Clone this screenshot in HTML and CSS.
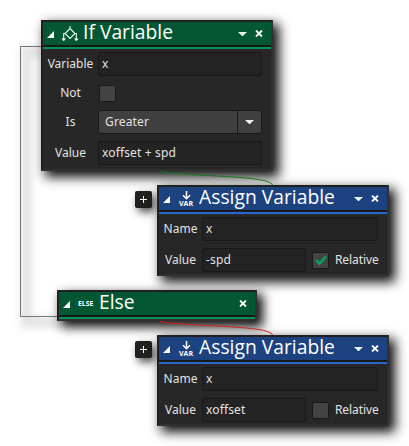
FILE: index.html
```html
<!DOCTYPE html>
<html lang="en">
<head>
<meta charset="utf-8">
<title>If Variable</title>
<link rel="stylesheet" href="styles.css">
</head>
<body>
<svg width="0" height="0" class="defs">
  <symbol id="fold" viewBox="0 0 7 7"><path d="M7 0V7H0Z" fill="#fff"/></symbol>
  <symbol id="down" viewBox="0 0 9 4"><path d="M0 0H9L4.5 4.4Z" fill="#e8f2ee"/></symbol>
  <symbol id="close" viewBox="0 0 8 7"><path d="M1 .5L7 6.5M7 .5L1 6.5" stroke="#fff" stroke-width="1.8"/></symbol>
  <symbol id="plus" viewBox="0 0 7 7"><path d="M3.5 0V7M0 3.5H7" stroke="#fff" stroke-width="1"/></symbol>
  <symbol id="arrow" viewBox="0 0 9 9"><path d="M4.5 0V7.5M1 4.2L4.5 7.7L8 4.2" fill="none" stroke="#fff" stroke-width="1.5"/></symbol>
</svg>
<main class="canvas">
  <svg class="wires" width="409" height="446" fill="none">
    <path class="shade" d="M41 52H26V322H60"/>
    <path class="bracket" d="M41 46.5H20.500V316.500H57"/>
  </svg>

  <section class="node if">
    <header>
      <svg class="fold"><use href="#fold"/></svg>
      <svg class="branch" viewBox="0 0 16 16" fill="none" stroke="#eef5f1" stroke-width="1.100"><path d="M8 0V3M8 2.500L13 7.500L8 12.500L3 7.500ZM3 7.500H1.700V14M13 7.500H14.300V14"/><path d="M0 12.700H3.400L1.700 15ZM12.600 12.700H16L14.300 15Z" fill="#eef5f1" stroke-width=".6"/></svg>
      <h1>If Variable</h1>
      <svg class="down"><use href="#down"/></svg>
      <svg class="close"><use href="#close"/></svg>
    </header>
    <div class="form">
      <label>Variable</label><div class="field">x</div>
      <label>Not</label><div class="check"></div>
      <label>Is</label><div class="field select"><span>Greater</span><i><svg class="down"><use href="#down"/></svg></i></div>
      <label>Value</label><div class="field">xoffset + spd</div>
    </div>
  </section>

  <div class="add first"><svg><use href="#plus"/></svg></div>
  <section class="node assign first">
    <header>
      <svg class="fold"><use href="#fold"/></svg>
      <div class="var"><svg><use href="#arrow"/></svg><b>VAR</b></div>
      <h1>Assign Variable</h1>
      <svg class="down"><use href="#down"/></svg>
      <svg class="close"><use href="#close"/></svg>
    </header>
    <div class="form">
      <label>Name</label><div class="field">x</div>
      <label>Value</label><div class="pair"><div class="field">-spd</div><div class="check"><svg viewBox="0 0 12 10"><path d="M1 5L4.500 8.500L11 1.500" fill="none" stroke="#0c9c5c" stroke-width="2.800"/></svg></div><span>Relative</span></div>
    </div>
  </section>

  <section class="node else">
    <header>
      <svg class="fold"><use href="#fold"/></svg>
      <b class="tag">ELSE</b>
      <h1>Else</h1>
      <svg class="close"><use href="#close"/></svg>
    </header>
  </section>

  <div class="add second"><svg><use href="#plus"/></svg></div>
  <section class="node assign second">
    <header>
      <svg class="fold"><use href="#fold"/></svg>
      <div class="var"><svg><use href="#arrow"/></svg><b>VAR</b></div>
      <h1>Assign Variable</h1>
      <svg class="down"><use href="#down"/></svg>
      <svg class="close"><use href="#close"/></svg>
    </header>
    <div class="form">
      <label>Name</label><div class="field">x</div>
      <label>Value</label><div class="pair"><div class="field">xoffset</div><div class="check"></div><span>Relative</span></div>
    </div>
  </section>

  <svg class="wires" width="409" height="446" fill="none">
    <path stroke="#19751f" d="M160 171.500C190 177 270 175 272.500 185"/>
    <path stroke="#d42020" d="M160 321.500C190 327 270 325 272.500 335"/>
  </svg>
</main>
</body>
</html>
```
FILE: styles.css
```css
*, *::after { box-sizing: border-box; }
body { margin: 0; background: #fff; font: 12px/24px "Noto Sans", sans-serif; color: #e2e2e2; }
svg { display: block; flex: none; overflow: visible; }
.defs { position: absolute; }
.canvas { position: relative; width: 409px; height: 446px; overflow: hidden; }
.wires { position: absolute; left: 0; top: 0; }
.bracket { stroke: #777; }
.shade { stroke: rgba(0,0,0,.1); stroke-width: 12; filter: blur(3.5px); }

.node {
  position: absolute;
  border: 2px solid #202020;
  border-color: #202020 #303030 #303030 #202020;
  background: #272727;
  box-shadow: 5px 5px 11px 1px rgba(0,0,0,.95);
}
.node.if { left: 41px; top: 20px; width: 232px; height: 151px; }
.node.assign { left: 157px; width: 232px; height: 91px; }
.node.assign.first { top: 185px; }
.node.assign.second { top: 335px; }
.node.else { left: 57px; top: 290px; width: 200px; height: 31px; }

header { position: relative; display: flex; align-items: center; height: 23px; padding: 0 8px 0 4px; background: #035833; }
header::after { content: ""; position: absolute; left: 0; right: 0; top: 23px; height: 4px; border-top: 2px solid #191919; background: #04945a; }
.assign header { background: #1c4280; }
.assign header::after { background: #2968d0; }
h1 { flex: 1; margin: -4px 0 0; font: 19.3px/23px "Open Sans", sans-serif; color: #fff; white-space: nowrap; }
.fold { width: 7px; height: 7px; margin-top: 1px; }
.branch { width: 16px; height: 16px; margin: 0 5px 0 8px; }
.down { width: 9px; height: 4px; }
.close { width: 8px; height: 7px; margin-left: 8px; }
.tag { width: 16px; margin: 1px 5px 0 8px; font: bold 6.8px/8px "Open Sans", sans-serif; color: #fff; }
.var { width: 14px; margin: 1px 6px 0 9px; display: flex; flex-direction: column; align-items: center; }
.var svg { width: 9px; height: 9px; }
.var b { font: bold 7px/7px "Open Sans", sans-serif; color: #fff; }

.form { display: grid; align-items: center; justify-items: center; padding-top: 7px; }
.if .form { grid-template-columns: 55px 164px; grid-template-rows: 24px 22px 24px 26px; row-gap: 6px; }
.assign .form { grid-template-columns: 43px 176px; grid-auto-rows: 24px; row-gap: 7px; }
.field { width: 100%; height: 24px; padding: 0 3px; line-height: 22px; letter-spacing: .15px; border: 1px solid #191919; border-radius: 2px; background: #232323; }
.select { display: flex; justify-content: space-between; padding: 0 0 0 6px; background: #404040; }
.select i { width: 24px; display: grid; place-items: center; border-left: 1px solid #191919; }
.check { width: 17px; height: 17px; flex: none; display: grid; place-items: center; border: 1px solid #191919; border-radius: 2px; background: #424444; }
.check svg { width: 12px; height: 10px; }
.if .check { justify-self: start; margin-left: 1px; }
.pair { display: flex; align-items: center; width: 100%; }
.pair .field { width: 104px; flex: none; margin-right: 6px; }
.pair span { margin-left: 6px; line-height: 22px; letter-spacing: -.1px; }

.add { position: absolute; left: 135px; width: 17px; height: 17px; display: grid; place-items: center; border-radius: 2px; background: #202020; box-shadow: 3px 4px 8px rgba(0,0,0,.7); }
.add.first { top: 191px; }
.add.second { top: 341px; }
.add svg { width: 7px; height: 7px; }
```
